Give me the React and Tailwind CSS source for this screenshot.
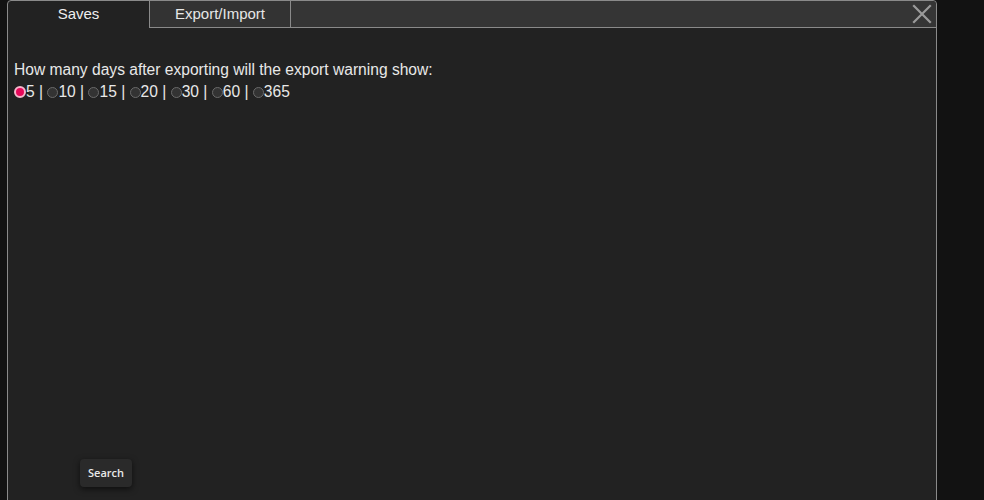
import React from "react";

const options = ["5", "10", "15", "20", "30", "60", "365"];

function Radio({ checked }) {
  return checked ? (
    <span className="inline-block w-[12px] h-[12px] rounded-full bg-[#e6085a] border-[2px] border-[#f7b6cc] box-border shrink-0" />
  ) : (
    <span className="inline-block w-[11px] h-[11px] rounded-full bg-[#333333] border border-[#6a6a6a] box-border shrink-0" />
  );
}

export default function App() {
  return (
    <div className="w-full h-[500px] bg-[#121212] flex overflow-hidden" style={{ fontFamily: '"Liberation Sans", Arial, sans-serif' }}>
      <div className="ml-[7px] w-[930px] h-[520px] bg-[#222222] border border-[#8a8a8a] rounded-t-[4px] flex flex-col">
        <div className="flex h-[27px] shrink-0">
          <div className="w-[141px] flex items-center justify-center text-[15px] text-[#eeeeee] rounded-tl-[4px]">Saves</div>
          <div className="w-[142px] flex items-center justify-center text-[15px] text-[#e6e6e6] bg-[#333333] border-l border-r border-b border-[#8a8a8a]">Export/Import</div>
          <div className="flex-1 bg-[#353535] border-b border-[#8a8a8a] rounded-tr-[4px] flex items-center justify-end pr-[4px]">
            <svg width="20" height="20" viewBox="0 0 20 20" className="mt-[-1px]">
              <path d="M2 2 L18 18 M18 2 L2 18" stroke="#9a9a9a" strokeWidth="2.2" strokeLinecap="square" fill="none" />
            </svg>
          </div>
        </div>
        <div className="flex-1 flex flex-col pl-[6px] pt-[33px]">
          <div className="text-[15.6px] leading-[18px] text-[#e8e8e8]">How many days after exporting will the export warning show:</div>
          <div className="mt-[3px] h-[20px] flex items-center text-[15.6px] leading-[18px] text-[#e8e8e8]">
            {options.map((o, i) => (
              <React.Fragment key={o}>
                {i > 0 && <span className="whitespace-pre">{" | "}</span>}
                <span className="flex items-center">
                  <Radio checked={i === 0} />
                  <span>{o}</span>
                </span>
              </React.Fragment>
            ))}
          </div>
          <div className="flex-1" />
          <button
            className="ml-[66px] mb-[32px] w-[52px] h-[28px] rounded-[4px] bg-[#2a2a2a] text-[11px] font-semibold text-[#e8e8e8] shadow-[0_2px_6px_rgba(0,0,0,0.6)]"
            style={{ fontFamily: '"Open Sans", "Noto Sans", sans-serif' }}
          >
            Search
          </button>
        </div>
      </div>
    </div>
  );
}
